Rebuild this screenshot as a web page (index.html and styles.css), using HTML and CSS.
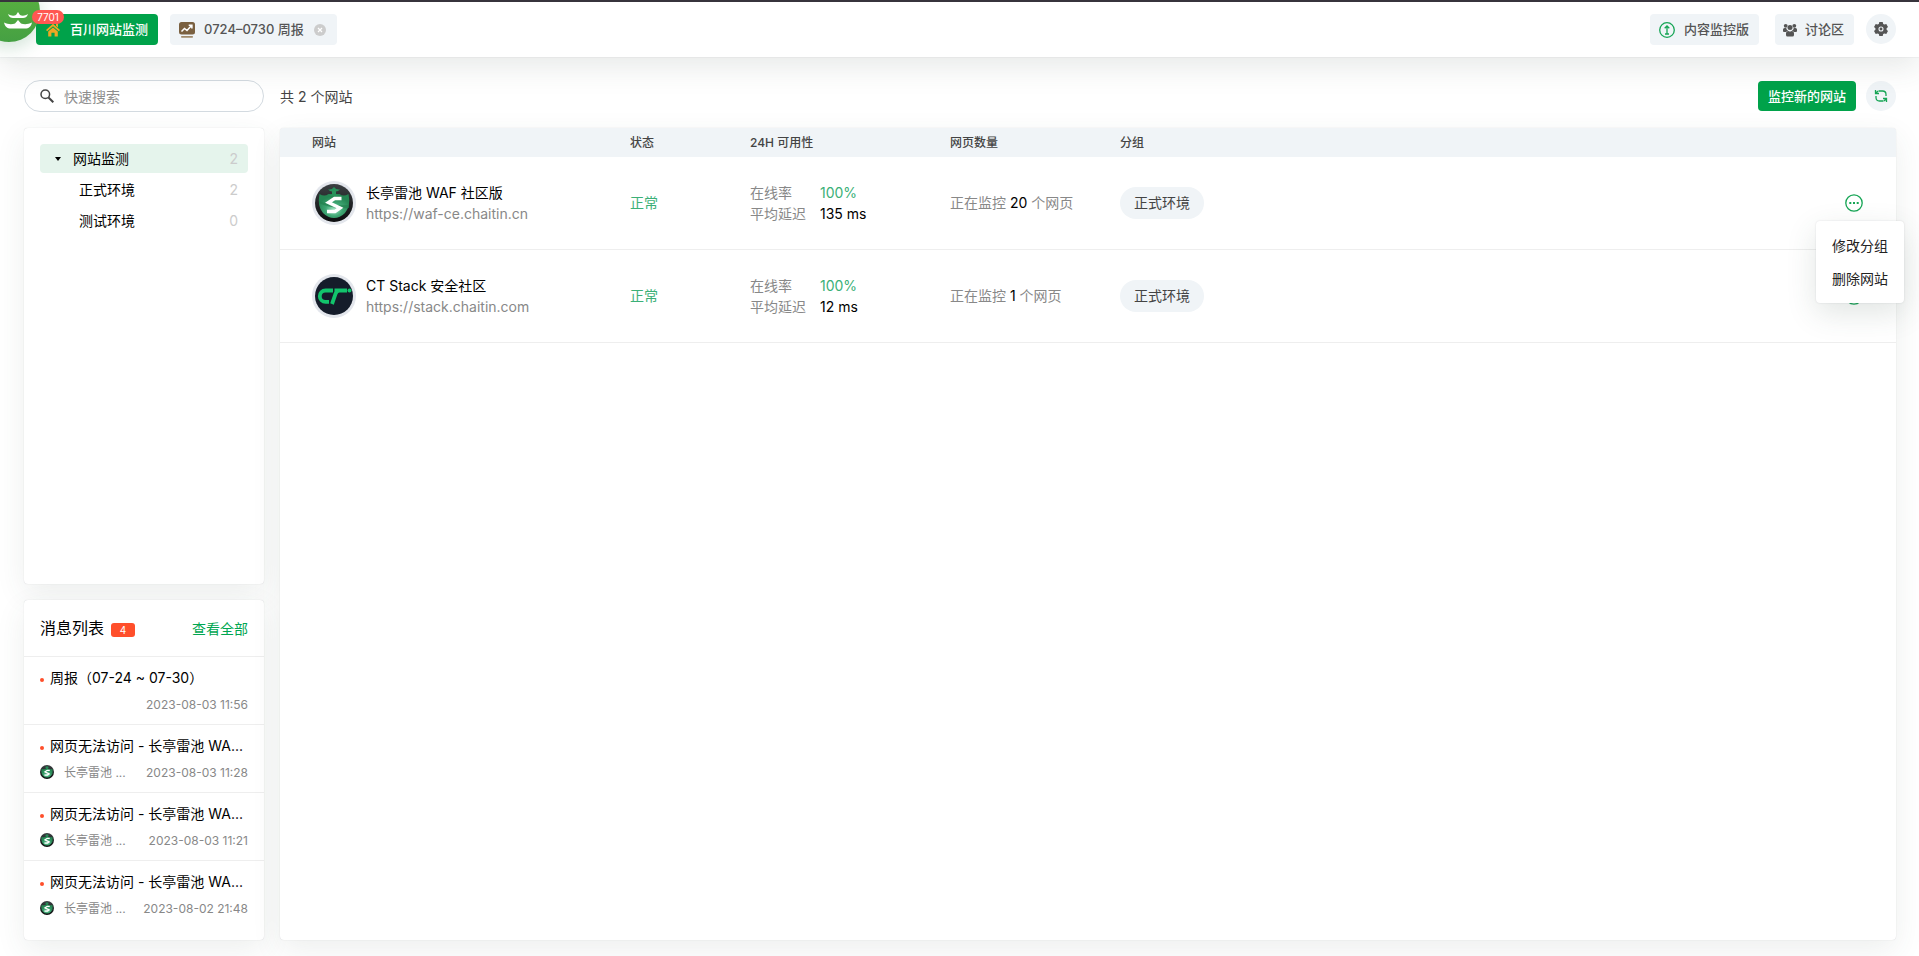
FILE: index.html
```html
<!DOCTYPE html>
<html lang="zh-CN">
<head>
<meta charset="utf-8">
<title>百川网站监测</title>
<link rel="stylesheet" href="styles.css">
</head>
<body>
<svg class="defs" aria-hidden="true">
  <defs>
    <linearGradient id="ring" x1="0" y1="0" x2="0" y2="1"><stop offset="0" stop-color="#3b3f42"/><stop offset="1" stop-color="#0c0d0e"/></linearGradient>
    <radialGradient id="core" cx=".5" cy=".65" r=".55"><stop offset="0" stop-color="#a4e6c4"/><stop offset=".5" stop-color="#3fa673"/><stop offset="1" stop-color="#258653"/></radialGradient>
    <symbol id="waf" viewBox="0 0 38 38">
      <circle cx="19" cy="19" r="19" fill="url(#ring)"/>
      <path d="M4.500 10q5 3 9 0h11q4 3 9 0Q36 22 30 29q-5 5-11 5t-11-5Q2 22 4.500 10z" fill="url(#core)"/>
      <path d="M13 5.500q4 .5 6-2.500 2 3 6 2.500-2 2-4 2v2.500q2 1.500 3 2H14q1-.5 3-2V7.500q-2 0-4-2z" fill="#27925a"/>
      <path d="M4 17q12 5 30 4v3Q15 25 4 19z" fill="#23804f" opacity=".7"/>
      <path d="M26.500 14.500h-7l-6 4 11.500 5.500-5 3.500h-8" fill="none" stroke="#fff" stroke-width="3.400"/>
    </symbol>
    <symbol id="more" viewBox="0 0 18 18">
      <circle cx="9" cy="9" r="8.200" fill="none" stroke="#16a555" stroke-width="1.300"/>
      <path d="M4.300 8h2v2h-2zM8 8h2v2H8zM11.700 8h2v2h-2z" fill="#16a555"/>
    </symbol>
  </defs>
</svg>

<header class="topbar">
  <a class="brand" href="#" aria-label="消息">
    <svg class="brand-mark" viewBox="0 0 28 18" fill="#fff">
      <path d="M14 0l2 3c2 1 5 1 8-1-1 3-3 4-5 4H9C7 6 5 5 4 2c3 2 6 2 8 1z"/>
      <path d="M14 8l3 3.500c3 1 7 1 11-1-1 4-3 6-7 6H7c-4 0-6-2-7-6 4 2 8 2 11 1z"/>
    </svg>
    <span class="brand-count">7701</span>
  </a>
  <nav class="tabs">
    <button class="tab tab-active" type="button">
      <svg class="home" viewBox="0 0 14 14" fill="#f0a724">
        <path d="M7 .8L14 7l-1.200 1.300L7 3.200 1.200 8.300 0 7z"/><path d="M10 1h2v3.500l-2-1.700z"/><path d="M2.200 8.600L7 4.400l4.800 4.200V13.500H8.600V9.800H5.400v3.700H2.200z"/>
      </svg>
      <span>百川网站监测</span>
    </button>
    <div class="tab tab-report">
      <svg class="report" viewBox="0 0 16 16"><rect width="16" height="12.500" rx="2.500" fill="#7a6040"/><path d="M2.500 9.500l3-3 2.500 2 4.500-5M9.700 3.200h3.200v3.200" fill="none" stroke="#fff" stroke-width="1.500"/><rect x="2" y="14" width="12" height="1.700" rx=".8" fill="#a08a6c"/></svg>
      <span>0724–0730 周报</span>
      <button class="tab-close" type="button" aria-label="关闭"><svg viewBox="0 0 12 12"><circle cx="6" cy="6" r="6" fill="#ccc"/><path d="M4 4l4 4M8 4L4 8" stroke="#fff" stroke-width="1.200"/></svg></button>
    </div>
  </nav>
  <div class="actions">
    <button class="tab action-upgrade" type="button">
      <svg class="report" viewBox="0 0 16 16" fill="none" stroke="#16a555"><circle cx="8" cy="8" r="7.300" stroke-width="1.300"/><path d="M8 4v8M5.700 6.300L8 4l2.300 2.300M6 12h4" stroke-width="1.300"/></svg>
      <span>内容监控版</span>
    </button>
    <button class="tab action-forum" type="button">
      <svg class="home" viewBox="0 0 14 14" fill="#555"><circle cx="2.700" cy="2.800" r="1.900"/><circle cx="11.300" cy="2.800" r="1.900"/><circle cx="7" cy="4.600" r="2.500"/><path d="M0 8V6.500Q0 5 1.500 5h1.700q.3 2 2 2.700Q3.500 8 3 9H1Q0 9 0 8zM14 8V6.500Q14 5 12.500 5h-1.700q-.3 2-2 2.700Q10.500 8 11 9h2q1 0 1-1zM3 12v-1.500Q3 8 5.500 8q1.500 1 3 0Q11 8 11 10.500V12q0 1.500-1.500 1.500h-5Q3 13.500 3 12z"/></svg>
      <span>讨论区</span>
    </button>
    <button class="round" type="button" aria-label="设置"><svg class="home" viewBox="0 0 14 14"><path d="M5.300 0h3.400l.5 1.900 1.200.7 1.900-.5L14 5l-1.400 1.300v1.400L14 9l-1.700 2.900-1.900-.5-1.200.7-.5 1.900H5.300l-.5-1.900-1.200-.7-1.900.5L0 9l1.400-1.300V6.300L0 5l1.700-2.900 1.900.5 1.200-.7z" fill="#555"/><circle cx="7" cy="7" r="2" fill="none" stroke="#eef2f6" stroke-width="1.100"/></svg></button>
  </div>
</header>

<main class="page">
  <aside class="side">
    <label class="search">
      <svg viewBox="0 0 14 14" fill="none" stroke="#444"><circle cx="5.300" cy="5.300" r="4.300" stroke-width="1.500"/><path d="M8.500 8.500l4.800 4.800" stroke-width="2"/></svg>
      <input type="text" placeholder="快速搜索" aria-label="快速搜索">
    </label>
    <section class="card tree">
      <a class="node node-root" href="#"><svg viewBox="0 0 6 4"><path d="M0 0h6L3 4z"/></svg><span>网站监测</span><span class="count">2</span></a>
      <a class="node" href="#"><span>正式环境</span><span class="count">2</span></a>
      <a class="node" href="#"><span>测试环境</span><span class="count">0</span></a>
    </section>
    <section class="card messages">
      <div class="messages-head"><h2>消息列表</h2><span class="badge">4</span><a href="#">查看全部</a></div>
      <article class="message"><h3>周报（07-24 ~ 07-30）</h3><div class="meta"><time>2023-08-03 11:56</time></div></article>
      <article class="message"><h3>网页无法访问 - 长亭雷池 WA...</h3><div class="meta"><svg><use href="#waf"/></svg><span>长亭雷池 ...</span><time>2023-08-03 11:28</time></div></article>
      <article class="message"><h3>网页无法访问 - 长亭雷池 WA...</h3><div class="meta"><svg><use href="#waf"/></svg><span>长亭雷池 ...</span><time>2023-08-03 11:21</time></div></article>
      <article class="message"><h3>网页无法访问 - 长亭雷池 WA...</h3><div class="meta"><svg><use href="#waf"/></svg><span>长亭雷池 ...</span><time>2023-08-02 21:48</time></div></article>
    </section>
  </aside>

  <section class="content">
    <div class="toolbar">
      <span class="total">共 2 个网站</span>
      <button class="primary" type="button">监控新的网站</button>
      <button class="round" type="button" aria-label="刷新"><svg class="home" viewBox="0 0 14 14" fill="none" stroke="#16a555" stroke-width="1.300"><path d="M4.500 2h4Q12 2 12 5.500V7M9.500 12h-4Q2 12 2 8.500V7"/><path d="M1.500 1v3.500H5M1.700 4.300L4 2M12.500 13V9.500H9M12.300 9.700L10 12"/></svg></button>
    </div>
    <div class="card list">
      <table>
        <thead><tr><th class="c-site">网站</th><th class="c-state">状态</th><th class="c-avail">24H 可用性</th><th class="c-pages">网页数量</th><th>分组</th><th class="c-more"></th></tr></thead>
        <tbody>
          <tr>
            <td class="c-site"><div class="site"><span class="avatar"><svg><use href="#waf"/></svg></span><div><div>长亭雷池 WAF 社区版</div><a href="#">https://waf-ce.chaitin.cn</a></div></div></td>
            <td class="ok">正常</td>
            <td><dl><dt>在线率</dt><dd class="ok">100%</dd><dt>平均延迟</dt><dd>135 ms</dd></dl></td>
            <td class="muted">正在监控 <b>20</b> 个网页</td>
            <td><span class="tag">正式环境</span></td>
            <td class="c-more"><div class="more-wrap"><button class="more" type="button" aria-label="更多"><svg><use href="#more"/></svg></button>
              <div class="menu"><button type="button">修改分组</button><button type="button">删除网站</button></div></div></td>
          </tr>
          <tr>
            <td class="c-site"><div class="site"><span class="avatar"><svg viewBox="0 0 38 38"><circle cx="19" cy="19" r="19" fill="#151c2a"/><path d="M18 13.500H10.500a5.700 5.700 0 0 0 0 11.400H14M19.500 13.500H32M24.500 13.500q-3 0-4 3.500L17 27" fill="none" stroke="#12c46c" stroke-width="3.800"/><circle cx="34.500" cy="13.500" r="2" fill="#12c46c"/></svg></span><div><div>CT Stack 安全社区</div><a href="#">https://stack.chaitin.com</a></div></div></td>
            <td class="ok">正常</td>
            <td><dl><dt>在线率</dt><dd class="ok">100%</dd><dt>平均延迟</dt><dd>12 ms</dd></dl></td>
            <td class="muted">正在监控 <b>1</b> 个网页</td>
            <td><span class="tag">正式环境</span></td>
            <td class="c-more"><button class="more" type="button" aria-label="更多"><svg><use href="#more"/></svg></button></td>
          </tr>
        </tbody>
      </table>
    </div>
  </section>
</main>
</body>
</html>
```
FILE: styles.css
```css
* { box-sizing: border-box; }
body {
  margin: 0;
  height: 100vh;
  display: flex;
  flex-direction: column;
  background: #fff;
  color: #000;
  font: 14px/21px Inter, "Noto Sans CJK SC", sans-serif;
  overflow: hidden;
}
.defs { position: absolute; width: 0; height: 0; }
button, input { font: inherit; color: inherit; border: 0; padding: 0; margin: 0; background: none; }
button { cursor: pointer; }
a { color: inherit; text-decoration: none; }
h2, h3, dl, dd { margin: 0; font-weight: 400; }
svg { display: block; flex: none; }

.topbar {
  position: relative;
  display: flex;
  justify-content: space-between;
  align-items: flex-start;
  height: 57px;
  padding: 12px 23px 0 36px;
  border-top: 2px solid #37343c;
  background: #fff;
  box-shadow: 0 0 1px rgba(0, 10, 30, .2), 0 10px 30px rgba(54, 78, 68, .12);
}
.brand {
  position: absolute;
  left: -22px;
  top: -22px;
  width: 62px;
  height: 62px;
  border-radius: 50%;
  background: linear-gradient(#5fb53f, #45a043);
  box-shadow: 0 6px 18px rgba(30, 120, 60, .2);
}
.topbar::before {
  content: "";
  position: absolute;
  z-index: 2;
  left: 0;
  right: 0;
  top: -2px;
  height: 2px;
  background: #37343c;
}
.brand-mark { position: absolute; left: 26px; top: 32px; width: 28px; height: 18px; }
.brand-count {
  position: absolute;
  z-index: 1;
  left: 54px;
  top: 30px;
  width: 32px;
  height: 14px;
  border-radius: 7px;
  background: #ff5751;
  color: #fff;
  font-size: 10px;
  line-height: 14px;
  text-align: center;
}
.tabs, .actions { display: flex; gap: 12px; }
.tab {
  display: flex;
  align-items: center;
  height: 31px;
  padding: 0 9px;
  gap: 9px;
  border-radius: 4px;
  background: #f0f4f7;
  color: #555;
  font-size: 13px;
  font-weight: 500;
  white-space: nowrap;
}
.tab-active { padding: 0 10px; gap: 10px; background: #00a24a; color: #fff; }
.tab-report { padding-right: 11px; }
.tab-close { margin-left: 1px; }
.home { width: 14px; height: 14px; }
.report { width: 16px; height: 16px; }
.tab-close svg { width: 12px; height: 12px; }
.action-upgrade { margin-right: 4px; padding: 0 10px 0 9px; }
.action-forum { padding: 0 10px 0 8px; gap: 8px; }
.round {
  display: flex;
  align-items: center;
  justify-content: center;
  width: 30px;
  height: 30px;
  border-radius: 50%;
  background: #f0f4f7;
}

.page { flex: 1; min-height: 0; display: flex; gap: 16px; padding: 23px 23px 16px 24px; }
.side { flex: none; width: 240px; display: flex; flex-direction: column; gap: 16px; }
.search {
  display: flex;
  align-items: center;
  gap: 10px;
  height: 32px;
  padding: 0 15px;
  border: 1px solid #d3dae0;
  border-radius: 16px;
  background: #fff;
}
.search svg { width: 14px; height: 14px; }
.search input { flex: 1; min-width: 0; outline: 0; }
.search input::placeholder { color: #8e8e8e; opacity: 1; }
.card {
  border-radius: 4px;
  background: #fff;
  box-shadow: 0 0 1px rgba(0, 10, 30, .2), 0 10px 30px rgba(54, 78, 68, .09);
}
.tree { flex: 1; display: flex; flex-direction: column; gap: 2px; padding: 16px; }
.node { display: flex; align-items: center; height: 29px; padding: 0 10px 0 39px; border-radius: 4px; }
.node-root { padding-left: 15px; background: #e5f4ec; }
.node svg { width: 6px; height: 4px; margin-right: 12px; }
.count { margin-left: auto; color: #ccc; }

.messages { padding-bottom: 12px; }
.messages-head { display: flex; align-items: center; height: 56px; padding: 0 16px; gap: 7px; }
.messages-head h2 { font-size: 16px; }
.messages-head a { margin-left: auto; color: #00a651; }
.badge { width: 24px; height: 14px; margin-top: 3px; border-radius: 3px; background: #ff4f2b; color: #fff; font-size: 10px; line-height: 14px; text-align: center; }
.message { height: 68px; padding: 10px 16px 0; border-top: 1px solid #eee; }
.message h3 {
  position: relative;
  padding-left: 10px;
  font-size: 14px;
  overflow: hidden;
  text-overflow: ellipsis;
  white-space: nowrap;
}
.message h3::before {
  content: "";
  position: absolute;
  left: 0;
  top: 11px;
  width: 4px;
  height: 4px;
  border-radius: 50%;
  background: #ff4f2b;
}
.meta { display: flex; align-items: center; height: 20px; margin-top: 6px; color: #888; font-size: 12px; }
.meta svg { width: 14px; height: 14px; margin-right: 10px; }
.meta span { width: 64px; overflow: hidden; text-overflow: ellipsis; white-space: nowrap; }
.meta time { margin-left: auto; white-space: nowrap; }

.content { flex: 1; min-width: 0; display: flex; flex-direction: column; gap: 16px; }
.toolbar { display: flex; align-items: center; height: 32px; gap: 10px; }
.total { margin-right: auto; color: #444; }
.primary { height: 30px; padding: 0 10px; border-radius: 4px; background: #00a24a; color: #fff; font-size: 13px; font-weight: 500; }
.list { flex: 1; }
table { width: 100%; table-layout: fixed; border-spacing: 0; }
th { height: 29px; padding: 0 0 1px; background: #f0f4f7; color: #444; font-size: 12px; font-weight: 500; text-align: left; }
th:first-child { border-top-left-radius: 4px; }
th:last-child { border-top-right-radius: 4px; }
td { height: 93px; padding: 0; border-bottom: 1px solid #eee; vertical-align: middle; }
td.ok, td.muted { padding-bottom: 2px; }
.c-site { width: 350px; padding-left: 32px; }
.c-state { width: 120px; }
.c-avail { width: 200px; }
.c-pages { width: 170px; }
.c-more { width: 83px; padding-left: 32px; }
.site { display: flex; align-items: center; gap: 10px; }
.site a, .muted, dt { color: #888; }
.avatar { flex: none; width: 44px; height: 44px; padding: 3px; border-radius: 50%; background: #e3e6ec; }
.avatar svg { width: 38px; height: 38px; }
.ok { color: #3bb077; }
dl { display: grid; grid-template-columns: 70px 1fr; }
b { color: #000; font-weight: 400; }
.tag { display: inline-block; height: 32px; padding: 0 14px; border-radius: 16px; background: #f0f4f7; color: #444; line-height: 32px; }
.more { display: block; width: 18px; height: 18px; }
.more svg { width: 18px; height: 18px; }
.more-wrap { position: relative; }
.menu {
  position: absolute;
  z-index: 3;
  right: -8px;
  top: 27px;
  width: 88px;
  padding: 8px 0;
  border-radius: 4px;
  background: #fff;
  box-shadow: 0 0 2px rgba(0, 10, 30, .12), 0 10px 30px rgba(54, 78, 68, .15);
}
.menu button { display: block; width: 100%; height: 33px; color: #222; text-align: center; }
```
